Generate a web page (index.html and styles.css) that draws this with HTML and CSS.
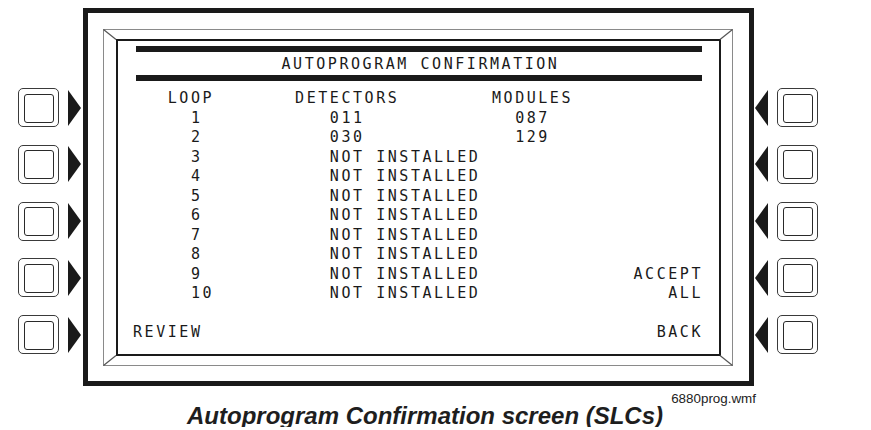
FILE: index.html
```html
<!DOCTYPE html>
<html lang="en">
<head>
    <meta charset="UTF-8">
    <title>Autoprogram Confirmation screen (SLCs)</title>
    <link rel="stylesheet" href="styles.css">
</head>
<body>
    <div class="figure">
        <div class="panel">
            <div class="keys keys-left">
                <div class="key-row"><div class="key"><div class="key-face"></div></div><div class="arrow arrow-right"></div></div>
                <div class="key-row"><div class="key"><div class="key-face"></div></div><div class="arrow arrow-right"></div></div>
                <div class="key-row"><div class="key"><div class="key-face"></div></div><div class="arrow arrow-right"></div></div>
                <div class="key-row"><div class="key"><div class="key-face"></div></div><div class="arrow arrow-right"></div></div>
                <div class="key-row"><div class="key"><div class="key-face"></div></div><div class="arrow arrow-right"></div></div>
            </div>

            <div class="frame">
                <div class="bevel">
                    <svg class="bevel-corners" viewBox="0 0 630 337" width="630" height="337">
                        <line x1="0.5" y1="0.5" x2="13" y2="10.5" />
                        <line x1="629.5" y1="0.5" x2="617" y2="10.5" />
                        <line x1="0.5" y1="336.5" x2="13" y2="326.5" />
                        <line x1="629.5" y1="336.5" x2="617" y2="326.5" />
                    </svg>
                    <div class="screen">
                        <div class="title-bar"></div>
                        <div class="title">AUTOPROGRAM CONFIRMATION</div>
                        <div class="title-bar"></div>

                        <div class="loops">
                            <span class="c-loop">LOOP</span><span class="c-det">DETECTORS</span><span class="c-mod">MODULES</span>
                            <span class="c-loop val">1</span><span class="c-det val">011</span><span class="c-mod val">087</span>
                            <span class="c-loop val">2</span><span class="c-det val">030</span><span class="c-mod val">129</span>
                            <span class="c-loop val">3</span><span class="c-det val">NOT INSTALLED</span><span class="c-mod"></span>
                            <span class="c-loop val">4</span><span class="c-det val">NOT INSTALLED</span><span class="c-mod"></span>
                            <span class="c-loop val">5</span><span class="c-det val">NOT INSTALLED</span><span class="c-mod"></span>
                            <span class="c-loop val">6</span><span class="c-det val">NOT INSTALLED</span><span class="c-mod"></span>
                            <span class="c-loop val">7</span><span class="c-det val">NOT INSTALLED</span><span class="c-mod"></span>
                            <span class="c-loop val">8</span><span class="c-det val">NOT INSTALLED</span><span class="c-mod"></span>
                            <span class="c-loop val">9</span><span class="c-det val">NOT INSTALLED</span><span class="c-mod soft">ACCEPT</span>
                            <span class="c-loop val">10</span><span class="c-det val">NOT INSTALLED</span><span class="c-mod soft">ALL</span>
                        </div>

                        <div class="soft-keys">
                            <span>REVIEW</span>
                            <span class="soft">BACK</span>
                        </div>
                    </div>
                </div>
            </div>

            <div class="keys keys-right">
                <div class="key-row"><div class="arrow arrow-left"></div><div class="key"><div class="key-face"></div></div></div>
                <div class="key-row"><div class="arrow arrow-left"></div><div class="key"><div class="key-face"></div></div></div>
                <div class="key-row"><div class="arrow arrow-left"></div><div class="key"><div class="key-face"></div></div></div>
                <div class="key-row"><div class="arrow arrow-left"></div><div class="key"><div class="key-face"></div></div></div>
                <div class="key-row"><div class="arrow arrow-left"></div><div class="key"><div class="key-face"></div></div></div>
            </div>
        </div>

        <div class="file-tag">6880prog.wmf</div>
        <div class="caption">Autoprogram Confirmation screen (SLCs)</div>
    </div>
</body>
</html>
```

FILE: styles.css
```css
body {
    margin: 0;
    background: #fff;
    color: #1a1a1a;
    font-family: "Liberation Sans", Arial, sans-serif;
}

.figure {
    width: 871px;
    padding-top: 8px;
}

.panel {
    display: flex;
    align-items: flex-start;
}

/* soft keys on both sides of the display */
.keys {
    display: flex;
    flex-direction: column;
    gap: 17.75px;
    padding-top: 80px;
}

.keys-left {
    width: 83px;
    box-sizing: border-box;
    padding-left: 18px;
}

.keys-right {
    padding-left: 1px;
}

.key-row {
    display: flex;
    align-items: center;
    gap: 9px;
}

.key {
    width: 41px;
    height: 39px;
    box-sizing: border-box;
    border: 1.5px solid #3a3a3a;
    border-radius: 5px;
    padding: 4.5px 4.5px 3.5px 4.5px;
}

.key-face {
    height: 100%;
    box-sizing: border-box;
    border: 1.5px solid #2a2a2a;
    border-radius: 3px;
}

.arrow {
    width: 0;
    height: 0;
    border-top: 18.5px solid transparent;
    border-bottom: 18.5px solid transparent;
}

.arrow-right {
    border-left: 13px solid #1a1a1a;
}

.arrow-left {
    border-right: 13px solid #1a1a1a;
}

/* display */
.frame {
    width: 671px;
    height: 378px;
    box-sizing: border-box;
    border: 5px solid #1a1a1a;
    padding: 16px 15px 0 15px;
}

.bevel {
    position: relative;
    width: 630px;
    height: 337px;
    box-sizing: border-box;
    border: 1px solid #8a8a8a;
    padding: 9px 11px 9px 12px;
}

.bevel-corners {
    position: absolute;
    left: -1px;
    top: -1px;
}

.bevel-corners line {
    stroke: #555;
    stroke-width: 1.2;
}

.screen {
    height: 100%;
    box-sizing: border-box;
    border: 2px solid #1a1a1a;
    padding: 5px 16px 0 15px;
    font-family: "DejaVu Sans Mono", monospace;
    font-size: 15px;
    letter-spacing: 2.55px;
    --cell: 11.58px;
}

.title-bar {
    height: 6px;
    margin: 0 1px 0 3px;
    background: #1a1a1a;
}

.title {
    height: 21px;
    line-height: 21px;
    padding-top: 2px;
    text-align: center;
    padding-left: 5px;
    white-space: pre;
}

.loops {
    display: grid;
    grid-template-columns: calc(var(--cell) * 14) calc(var(--cell) * 17) 1fr;
    grid-auto-rows: 19.5px;
    line-height: 19.5px;
    margin-top: 8.25px;
    white-space: pre;
}

.c-loop {
    padding-left: calc(var(--cell) * 3);
}

.c-loop.val {
    padding-left: calc(var(--cell) * 5);
}

.c-det.val {
    padding-left: calc(var(--cell) * 3);
}

.c-mod.val {
    padding-left: calc(var(--cell) * 2);
}

.soft {
    text-align: right;
}

.soft-keys {
    display: flex;
    justify-content: space-between;
    line-height: 19.5px;
    margin-top: 19.5px;
}

/* caption */
.file-tag {
    width: 756px;
    text-align: right;
    font-size: 13.4px;
    line-height: 11px;
    margin-top: 6.5px;
    color: #222;
}

.caption {
    padding-left: 187px;
    margin-top: 1px;
    font-size: 24px;
    line-height: 22px;
    font-weight: bold;
    font-style: italic;
    color: #1e1e1e;
}
```
